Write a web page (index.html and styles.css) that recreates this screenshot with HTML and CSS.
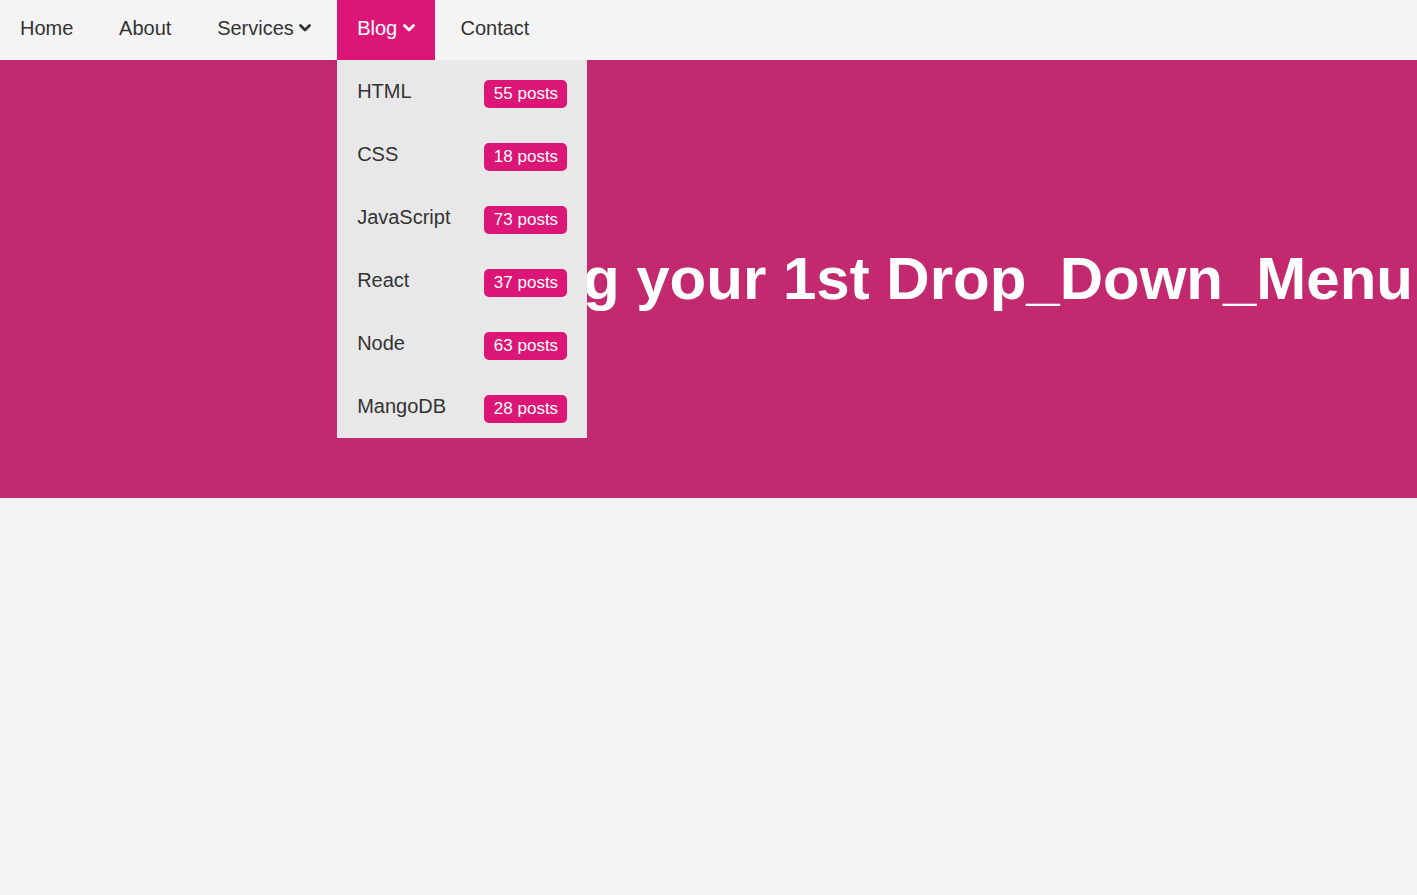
FILE: index.html
```html
<!DOCTYPE html>
<html lang="en">
<head>
<meta charset="utf-8">
<title>Drop Down Menu</title>
<link rel="stylesheet" href="styles.css">
</head>
<body>
<nav class="nav">
  <ul class="menu">
    <li class="menu-item"><a href="#">Home</a></li>
    <li class="menu-item"><a href="#">About</a></li>
    <li class="menu-item"><a href="#">Services <svg class="chev" viewBox="0 0 12 12"><path d="M1.5 3.5 L6 8 L10.5 3.5" /></svg></a></li>
    <li class="menu-item active"><a href="#">Blog <svg class="chev" viewBox="0 0 12 12"><path d="M1.5 3.5 L6 8 L10.5 3.5" /></svg></a>
      <ul class="dropdown">
        <li class="drop-item"><span>HTML</span><span class="badge">55 posts</span></li>
        <li class="drop-item"><span>CSS</span><span class="badge">18 posts</span></li>
        <li class="drop-item"><span>JavaScript</span><span class="badge">73 posts</span></li>
        <li class="drop-item"><span>React</span><span class="badge">37 posts</span></li>
        <li class="drop-item"><span>Node</span><span class="badge">63 posts</span></li>
        <li class="drop-item"><span>MangoDB</span><span class="badge">28 posts</span></li>
      </ul>
    </li>
    <li class="menu-item"><a href="#">Contact</a></li>
  </ul>
</nav>
<header class="hero">
  <h1 class="title">Creating your 1st Drop_Down_Menu</h1>
</header>
</body>
</html>
```

FILE: styles.css
```css
* { box-sizing: border-box; }
html, body { margin: 0; padding: 0; }
body {
  background: #f4f4f4;
  font-family: "Liberation Sans", Arial, sans-serif;
  color: #333;
  overflow: hidden;
}
.nav {
  background: #f4f4f4;
  height: 60px;
  position: relative;
  z-index: 10;
}
.menu {
  list-style: none;
  margin: 0;
  padding: 0;
  font-size: 0;
  height: 60px;
}
.menu-item {
  display: inline-block;
  position: relative;
  font-size: 20px;
  margin-right: 5.75px;
}
.menu-item > a {
  display: block;
  height: 60px;
  line-height: 57px;
  padding: 0 20px;
  color: #333;
  text-decoration: none;
}
.menu-item.active > a {
  background: #dc1677;
  color: #fff;
}
.chev {
  width: 12px;
  height: 12px;
  vertical-align: 1px;
  fill: none;
  stroke: currentColor;
  stroke-width: 2.8;
  stroke-linecap: round;
  stroke-linejoin: round;
}
.dropdown {
  position: absolute;
  top: 60px;
  left: 0;
  width: 250px;
  margin: 0;
  padding: 0;
  list-style: none;
  background: #e8e8e8;
}
.drop-item {
  display: flex;
  justify-content: space-between;
  align-items: center;
  height: 63px;
  padding: 0 20px;
  font-size: 20px;
  color: #333;
}
.badge {
  background: #dc1677;
  color: #fff;
  font-size: 17px;
  line-height: 20px;
  padding: 4px 9px 4px 9.5px;
  border-radius: 5px;
  margin-top: 4px;
}
.hero {
  background: #c2296f;
  height: 438px;
  display: flex;
  align-items: center;
  justify-content: flex-end;
  padding-right: 4px;
  overflow: hidden;
}
.title {
  margin: 0;
  color: #fff;
  font-size: 60px;
  font-weight: bold;
  white-space: nowrap;
  line-height: 1;
}
```
